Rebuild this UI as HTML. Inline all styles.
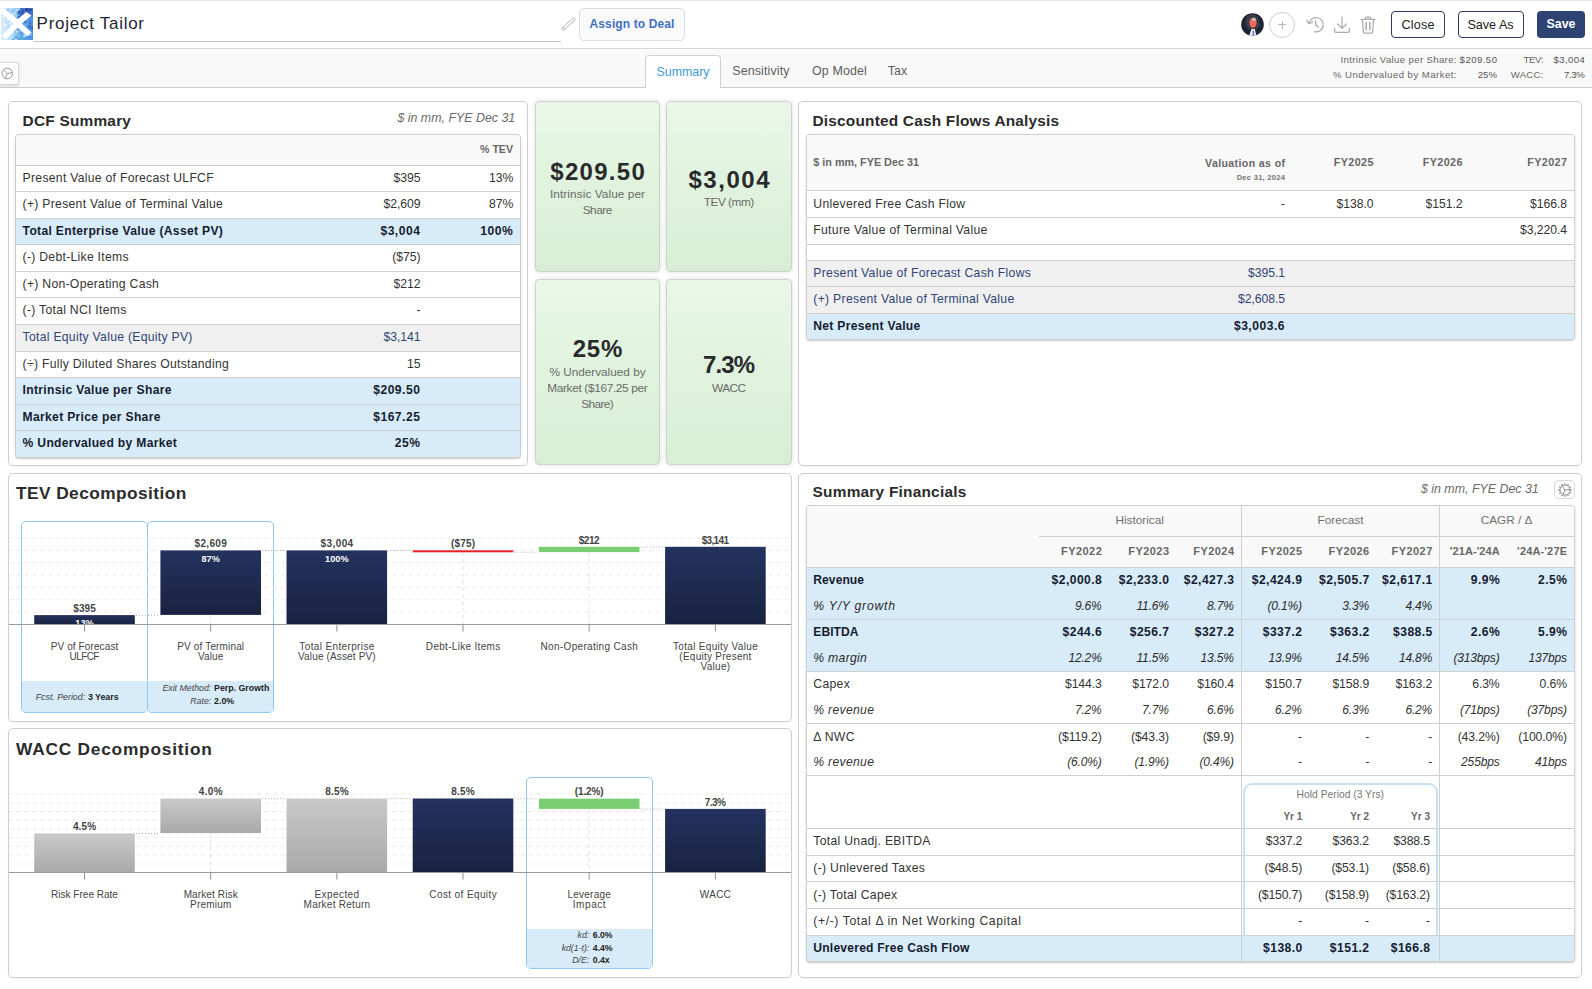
<!DOCTYPE html>
<html lang="en"><head><meta charset="utf-8"><title>Project Tailor</title>
<style>
html,body{margin:0;padding:0;}
body{width:1592px;height:989px;overflow:hidden;background:#fff;font-family:"Liberation Sans",Arial,sans-serif;color:#333;}
#r{position:relative;width:1592px;height:989px;overflow:hidden;}
#r div{position:absolute;box-sizing:border-box;}
#r svg{position:absolute;overflow:visible;}
.t{white-space:nowrap;}
.p{background:#fff;border:1px solid #cdcdcd;border-radius:5px;box-shadow:0 1px 2px rgba(0,0,0,.05);}
.tb{border:1px solid #cfcfcf;border-radius:4px;box-shadow:0 1px 2px rgba(0,0,0,.22);overflow:hidden;background:#fff;}
</style></head>
<body><div id="r">
<div style="left:0px;top:0px;width:1592px;height:1px;background:#e4e4e4;"></div>
<svg style="left:1px;top:8px" width="32" height="32" viewBox="0 0 32 32">
<defs><linearGradient id="lg" x1="0" y1="0" x2="1" y2="0"><stop offset="0" stop-color="#dcedf9"/><stop offset=".4" stop-color="#a6d5f4"/><stop offset=".62" stop-color="#62adeb"/><stop offset="1" stop-color="#4d8fe0"/></linearGradient><clipPath id="lc"><rect width="32" height="32"/></clipPath></defs>
<g clip-path="url(#lc)"><rect width="32" height="32" fill="url(#lg)"/>
<path d="M17 0 L32 0 L32 9 L27 6 L19 12 Z" fill="#3a62bd" opacity=".8"/>
<rect x="20.9" y="1.7" width="2.1" height="2.1" fill="#2c4fa6"/><rect x="28.3" y="1.0" width="2.1" height="2.1" fill="#1f3b86"/><rect x="16.6" y="4.8" width="1.4" height="1.4" fill="#2c4fa6"/><rect x="24.3" y="0.7" width="2.0" height="2.0" fill="#1f3b86"/><rect x="25.5" y="6.4" width="1.4" height="1.4" fill="#4b7fd6"/><rect x="16.7" y="2.4" width="2.0" height="2.0" fill="#1f3b86"/><rect x="20.3" y="1.6" width="1.5" height="1.5" fill="#3f6cc8"/><rect x="24.4" y="7.5" width="1.4" height="1.4" fill="#1f3b86"/><rect x="21.6" y="6.0" width="1.4" height="1.4" fill="#2c4fa6"/><rect x="25.3" y="5.5" width="2.0" height="2.0" fill="#3f6cc8"/><rect x="23.0" y="10.2" width="1.8" height="1.8" fill="#1f3b86"/><rect x="27.9" y="7.7" width="1.6" height="1.6" fill="#3f6cc8"/><rect x="23.9" y="9.6" width="2.2" height="2.2" fill="#3f6cc8"/><rect x="25.1" y="0.8" width="2.0" height="2.0" fill="#1f3b86"/><rect x="27.4" y="1.7" width="1.9" height="1.9" fill="#2c4fa6"/><rect x="30.4" y="0.9" width="2.0" height="2.0" fill="#3f6cc8"/><rect x="21.1" y="3.9" width="1.9" height="1.9" fill="#4b7fd6"/><rect x="17.0" y="1.0" width="1.7" height="1.7" fill="#2c4fa6"/><rect x="16.9" y="7.7" width="2.1" height="2.1" fill="#4b7fd6"/><rect x="20.3" y="4.2" width="2.2" height="2.2" fill="#2c4fa6"/><rect x="30.1" y="3.9" width="2.1" height="2.1" fill="#4b7fd6"/><rect x="16.9" y="8.5" width="1.5" height="1.5" fill="#1f3b86"/><rect x="22.0" y="10.1" width="1.9" height="1.9" fill="#1f3b86"/><rect x="22.7" y="6.0" width="2.4" height="2.4" fill="#4b7fd6"/><rect x="29.0" y="3.1" width="1.8" height="1.8" fill="#3f6cc8"/><rect x="26.2" y="4.2" width="1.6" height="1.6" fill="#2c4fa6"/><rect x="20.3" y="12.9" width="1.6" height="1.6" fill="#78baf0"/><rect x="28.8" y="12.1" width="1.7" height="1.7" fill="#4b86dc"/><rect x="23.4" y="15.3" width="2.0" height="2.0" fill="#4b86dc"/><rect x="27.0" y="17.8" width="2.1" height="2.1" fill="#3f6cc8"/><rect x="23.9" y="23.8" width="2.5" height="2.5" fill="#78baf0"/><rect x="23.2" y="15.7" width="1.9" height="1.9" fill="#78baf0"/><rect x="18.8" y="10.1" width="1.6" height="1.6" fill="#4b86dc"/><rect x="19.4" y="19.2" width="1.4" height="1.4" fill="#4b86dc"/><rect x="25.0" y="25.1" width="2.1" height="2.1" fill="#3f6cc8"/><rect x="29.4" y="19.4" width="1.5" height="1.5" fill="#3561bd"/><rect x="30.4" y="19.2" width="1.9" height="1.9" fill="#3f6cc8"/><rect x="29.0" y="25.9" width="1.9" height="1.9" fill="#78baf0"/><rect x="22.1" y="11.4" width="2.3" height="2.3" fill="#3561bd"/><rect x="24.2" y="20.8" width="2.0" height="2.0" fill="#4b86dc"/><rect x="30.4" y="18.0" width="1.5" height="1.5" fill="#3f6cc8"/><rect x="27.9" y="14.1" width="2.1" height="2.1" fill="#3f6cc8"/><rect x="27.1" y="13.4" width="1.8" height="1.8" fill="#4b86dc"/><rect x="22.6" y="12.8" width="2.0" height="2.0" fill="#3561bd"/><rect x="26.3" y="19.4" width="2.3" height="2.3" fill="#4b86dc"/><rect x="28.5" y="22.9" width="2.3" height="2.3" fill="#4b86dc"/><rect x="20.6" y="17.4" width="2.3" height="2.3" fill="#3f6cc8"/><rect x="28.3" y="17.0" width="1.6" height="1.6" fill="#3561bd"/><rect x="10.4" y="10.3" width="2.6" height="2.6" fill="#7ec0ef"/><rect x="6.0" y="1.1" width="1.9" height="1.9" fill="#7ec0ef"/><rect x="7.5" y="6.9" width="2.5" height="2.5" fill="#8fcbf2"/><rect x="10.8" y="7.2" width="2.3" height="2.3" fill="#8fcbf2"/><rect x="15.0" y="1.3" width="1.8" height="1.8" fill="#c4e3f8"/><rect x="10.7" y="2.0" width="2.3" height="2.3" fill="#7ec0ef"/><rect x="6.0" y="10.4" width="2.2" height="2.2" fill="#b5dcf6"/><rect x="9.8" y="10.4" width="2.2" height="2.2" fill="#c4e3f8"/><rect x="16.9" y="0.3" width="2.1" height="2.1" fill="#b5dcf6"/><rect x="14.7" y="1.6" width="2.4" height="2.4" fill="#b5dcf6"/><rect x="12.9" y="3.9" width="2.0" height="2.0" fill="#c4e3f8"/><rect x="5.3" y="8.8" width="2.2" height="2.2" fill="#8fcbf2"/><rect x="11.3" y="10.3" width="1.9" height="1.9" fill="#c4e3f8"/><rect x="14.9" y="2.3" width="1.6" height="1.6" fill="#7ec0ef"/><rect x="11.0" y="8.4" width="1.7" height="1.7" fill="#b5dcf6"/><rect x="15.0" y="0.7" width="2.3" height="2.3" fill="#b5dcf6"/><rect x="12.9" y="9.0" width="2.0" height="2.0" fill="#c4e3f8"/><rect x="11.4" y="5.8" width="1.3" height="1.3" fill="#b5dcf6"/><rect x="9.3" y="18.4" width="2.3" height="2.3" fill="#bfe0f6"/><rect x="2.1" y="15.4" width="2.2" height="2.2" fill="#eef7fd"/><rect x="3.9" y="16.4" width="2.0" height="2.0" fill="#eef7fd"/><rect x="10.6" y="6.3" width="1.5" height="1.5" fill="#eef7fd"/><rect x="9.3" y="16.2" width="2.0" height="2.0" fill="#eef7fd"/><rect x="5.3" y="18.5" width="2.0" height="2.0" fill="#bfe0f6"/><rect x="8.3" y="15.0" width="2.0" height="2.0" fill="#cfe7f8"/><rect x="6.1" y="10.4" width="2.0" height="2.0" fill="#ffffff"/><rect x="11.1" y="24.6" width="1.6" height="1.6" fill="#cfe7f8"/><rect x="1.6" y="7.7" width="1.9" height="1.9" fill="#eef7fd"/><rect x="8.1" y="14.4" width="1.6" height="1.6" fill="#ffffff"/><rect x="9.4" y="24.7" width="1.5" height="1.5" fill="#ffffff"/><rect x="1.7" y="24.4" width="2.6" height="2.6" fill="#bfe0f6"/><rect x="9.0" y="7.1" width="2.5" height="2.5" fill="#bfe0f6"/><rect x="11.9" y="23.3" width="1.5" height="1.5" fill="#cfe7f8"/><rect x="11.9" y="13.9" width="1.8" height="1.8" fill="#ffffff"/><rect x="3.8" y="20.9" width="1.3" height="1.3" fill="#cfe7f8"/><rect x="5.3" y="5.4" width="1.7" height="1.7" fill="#ffffff"/><rect x="6.1" y="6.4" width="2.6" height="2.6" fill="#bfe0f6"/><rect x="11.7" y="7.3" width="1.6" height="1.6" fill="#eef7fd"/><rect x="10.9" y="9.0" width="2.3" height="2.3" fill="#cfe7f8"/><rect x="10.2" y="19.9" width="2.5" height="2.5" fill="#cfe7f8"/><rect x="11.3" y="30.2" width="2.0" height="2.0" fill="#6fb4ee"/><rect x="10.0" y="21.6" width="2.2" height="2.2" fill="#3f8be0"/><rect x="27.7" y="23.7" width="1.3" height="1.3" fill="#4f9fe8"/><rect x="25.6" y="21.8" width="2.4" height="2.4" fill="#4f9fe8"/><rect x="13.8" y="22.2" width="1.3" height="1.3" fill="#c2e0f7"/><rect x="17.2" y="30.2" width="2.1" height="2.1" fill="#4f9fe8"/><rect x="19.6" y="23.4" width="1.4" height="1.4" fill="#d7ebf9"/><rect x="13.8" y="22.8" width="2.5" height="2.5" fill="#6fb4ee"/><rect x="19.7" y="23.1" width="1.9" height="1.9" fill="#d7ebf9"/><rect x="14.0" y="29.0" width="2.6" height="2.6" fill="#4f9fe8"/><rect x="8.3" y="28.3" width="2.0" height="2.0" fill="#d7ebf9"/><rect x="19.3" y="23.5" width="1.9" height="1.9" fill="#3f8be0"/><rect x="22.4" y="26.5" width="2.5" height="2.5" fill="#c2e0f7"/><rect x="14.8" y="23.2" width="1.6" height="1.6" fill="#d7ebf9"/><rect x="26.3" y="28.1" width="2.1" height="2.1" fill="#3f8be0"/><rect x="29.8" y="30.8" width="2.4" height="2.4" fill="#4f9fe8"/><rect x="9.6" y="28.4" width="1.6" height="1.6" fill="#d7ebf9"/><rect x="9.2" y="27.7" width="1.8" height="1.8" fill="#c2e0f7"/><rect x="22.8" y="23.8" width="1.6" height="1.6" fill="#6fb4ee"/><rect x="9.0" y="22.9" width="1.6" height="1.6" fill="#4f9fe8"/><rect x="13.8" y="30.6" width="2.6" height="2.6" fill="#c2e0f7"/><rect x="15.1" y="21.3" width="2.4" height="2.4" fill="#d7ebf9"/><rect x="15.8" y="21.0" width="1.8" height="1.8" fill="#3f8be0"/><rect x="14.1" y="27.6" width="1.6" height="1.6" fill="#4f9fe8"/>
<path d="M0 1 L2.6 0 L16.3 11.6 L25.2 4 L30.6 7.4 L20.6 15.6 L30.6 24.4 L26.6 28.6 L16.6 19.6 L5 31.6 L0.6 27.6 L12.4 16 L0 5 Z" fill="#fff"/>
</g></svg>
<div class="t" style="top:12.00px;font-size:17px;line-height:24px;color:#1d2433;letter-spacing:0.727px;left:36.60px;">Project Tailor</div>
<div style="left:33px;top:41px;width:528px;height:1px;background:#c4c4c4;"></div>
<svg style="left:560.4px;top:15px" width="18" height="18" viewBox="0 0 18 18" fill="none" stroke="#c2c2c2" stroke-width="1"><g transform="rotate(-43 8.4 9)"><rect x="0.2" y="7.6" width="16.4" height="2.8" rx="1"/><path d="M2.6 7.4 L2.6 10.6"/></g></svg>
<div style="left:579px;top:8px;width:106px;height:33px;border:1px solid #dbdbdb;border-radius:5px;background:#fafafa;"></div>
<div class="t" style="top:16.00px;font-size:12px;line-height:16px;color:#416fc4;font-weight:700;letter-spacing:0.119px;left:632.06px;transform:translateX(-50%);">Assign to Deal</div>
<svg style="left:1241px;top:13px" width="23" height="23" viewBox="0 0 23 23"><defs><clipPath id="av"><circle cx="11.5" cy="11.5" r="11.3"/></clipPath></defs>
<g clip-path="url(#av)"><rect width="23" height="23" fill="#1f2433"/><path d="M6 3 Q12 -1 17 4 L19 12 L16 16 L7 16 L4 10 Z" fill="#3a3d49"/><ellipse cx="12" cy="9.6" rx="3.6" ry="5.2" fill="#f0675c"/><ellipse cx="13" cy="6.4" rx="2" ry="1.6" fill="#b9bcc4"/><path d="M8 23 L10.5 16 L13.8 16 L15.5 23 Z" fill="#f4f4f6"/><path d="M11.6 17.5 L13 17.5 L13.4 23 L11.4 23 Z" fill="#5f86c8"/></g></svg>
<div style="left:1269px;top:12px;width:26px;height:26px;border:1px solid #cbcbcb;border-radius:50%;background:#fff;"></div>
<div style="left:1277.6px;top:24.4px;width:8.800000000000182px;height:1px;background:#b9b9b9;"></div>
<div style="left:1281.5px;top:20.5px;width:1px;height:8.8px;background:#b9b9b9;"></div>
<svg style="left:1305px;top:15px" width="20" height="20" viewBox="0 0 20 20" fill="none" stroke="#ababab" stroke-width="1.25" stroke-linecap="round" stroke-linejoin="round"><path d="M4.2 8.4 A7.1 7.1 0 1 1 9.5 16.6"/><path d="M2 5.2 L4.1 8.7 L7.6 6.9"/><path d="M10.6 5.6 L10.6 9.9 L13.4 11.9"/></svg>
<svg style="left:1333px;top:15px" width="18" height="20" viewBox="0 0 18 20" fill="none" stroke="#ababab" stroke-width="1.25" stroke-linecap="round" stroke-linejoin="round"><path d="M9 2 L9 13.2 M4.6 9 L9 13.4 L13.4 9"/><path d="M1.6 13.4 L1.6 16.2 Q1.6 17.4 2.8 17.4 L15.2 17.4 Q16.4 17.4 16.4 16.2 L16.4 13.4"/></svg>
<svg style="left:1360px;top:15px" width="16" height="20" viewBox="0 0 16 20" fill="none" stroke="#ababab" stroke-width="1.25" stroke-linecap="round" stroke-linejoin="round"><path d="M1.2 4.4 L14.8 4.4 M5.4 4.2 Q5.4 1.8 8 1.8 Q10.6 1.8 10.6 4.2 M2.4 4.6 L3.4 17.2 Q3.5 18.2 4.5 18.2 L11.5 18.2 Q12.5 18.2 12.6 17.2 L13.6 4.6"/><path d="M6.2 7.4 L6.2 15 M9.8 7.4 L9.8 15" stroke-width="1.5"/></svg>
<div style="left:1391px;top:11px;width:54px;height:27px;border:1.3px solid #2c3a63;border-radius:4px;background:#fff;"></div>
<div class="t" style="top:17.00px;font-size:12.6px;line-height:16px;color:#222;letter-spacing:0.2px;left:1418.00px;transform:translateX(-50%);">Close</div>
<div style="left:1458px;top:11px;width:66px;height:27px;border:1.3px solid #2c3a63;border-radius:4px;background:#fff;"></div>
<div class="t" style="top:17.00px;font-size:12.6px;line-height:16px;color:#222;left:1490.50px;transform:translateX(-50%);">Save As</div>
<div style="left:1537px;top:11px;width:48px;height:27px;border-radius:4px;background:#2e4273;"></div>
<div class="t" style="top:16.00px;font-size:12.4px;line-height:16px;color:#fff;font-weight:700;left:1561.00px;transform:translateX(-50%);">Save</div>
<div style="left:0px;top:48px;width:1592px;height:40px;background:#f9f9f9;border-top:1px solid #d6d6d6;border-bottom:1px solid #cdcdcd;"></div>
<div style="left:-2px;top:62px;width:20.5px;height:22.5px;background:#fff;border:1px solid #d8d8d8;border-radius:3px;box-shadow:0 1px 3px rgba(0,0,0,.15);"></div>
<svg style="left:1px;top:66.5px" width="13" height="13" viewBox="0 0 13 13" fill="none" stroke="#9a9a9a" stroke-width="1"><circle cx="6.2" cy="6.5" r="5.3"/><path d="M6.2 6.5 L2.6 3 M6.2 6.5 L11.3 5.6 M6.2 6.5 L4.4 11.2"/></svg>
<div style="left:645px;top:55px;width:76px;height:33px;background:#fff;border:1px solid #d0d0d0;border-bottom:none;border-radius:4px 4px 0 0;"></div>
<div class="t" style="top:64.00px;font-size:12.4px;line-height:16px;color:#429bd6;left:683.00px;transform:translateX(-50%);">Summary</div>
<div class="t" style="top:63.00px;font-size:12.4px;line-height:16px;color:#5c5c5c;letter-spacing:0.15px;left:761.00px;transform:translateX(-50%);">Sensitivity</div>
<div class="t" style="top:63.00px;font-size:12.4px;line-height:16px;color:#5c5c5c;letter-spacing:0.15px;left:839.50px;transform:translateX(-50%);">Op Model</div>
<div class="t" style="top:63.00px;font-size:12.4px;line-height:16px;color:#5c5c5c;letter-spacing:0.15px;left:897.50px;transform:translateX(-50%);">Tax</div>
<div class="t" style="top:54.00px;font-size:9.6px;line-height:12px;color:#666;letter-spacing:0.357px;right:135.14px;">Intrinsic Value per Share:</div>
<div class="t" style="top:54.00px;font-size:9.6px;line-height:12px;color:#555;letter-spacing:0.45px;right:94.55px;">$209.50</div>
<div class="t" style="top:69.00px;font-size:9.6px;line-height:12px;color:#666;letter-spacing:0.456px;right:135.04px;">% Undervalued by Market:</div>
<div class="t" style="top:69.00px;font-size:9.6px;line-height:12px;color:#555;letter-spacing:0.043px;right:94.96px;">25%</div>
<div class="t" style="top:54.00px;font-size:9.6px;line-height:12px;color:#666;letter-spacing:-0.294px;right:48.79px;">TEV:</div>
<div class="t" style="top:54.00px;font-size:9.6px;line-height:12px;color:#555;letter-spacing:0.407px;right:6.79px;">$3,004</div>
<div class="t" style="top:69.00px;font-size:9.6px;line-height:12px;color:#666;letter-spacing:0.315px;right:48.18px;">WACC:</div>
<div class="t" style="top:69.00px;font-size:9.6px;line-height:12px;color:#555;letter-spacing:-0.327px;right:7.53px;">7.3%</div>
<div class="p" style="left:8px;top:101px;width:520px;height:365px;"></div>
<div class="t" style="top:111.00px;font-size:15.4px;line-height:20px;color:#2b2b2b;font-weight:700;letter-spacing:0.228px;left:22.60px;">DCF Summary</div>
<div class="t" style="top:110.00px;font-size:12.4px;line-height:16px;color:#6a6a6a;font-style:italic;right:1076.80px;">$ in mm, FYE Dec 31</div>
<div class="tb" style="left:15px;top:134px;width:506px;height:324.00px;">
<div style="left:0;top:0;width:506px;height:30px;background:#f9f9f9;"></div>
<div style="left:0;top:30px;width:506px;height:28.55px;background:#fff;border-top:1px solid #cfcfcf;"></div>
<div style="left:0;top:56px;width:506px;height:28.55px;background:#fff;border-top:1px solid #cfcfcf;"></div>
<div style="left:0;top:83px;width:506px;height:28.55px;background:#d8ebf9;border-top:1px solid #cfcfcf;"></div>
<div style="left:0;top:109px;width:506px;height:28.55px;background:#fff;border-top:1px solid #cfcfcf;"></div>
<div style="left:0;top:136px;width:506px;height:28.55px;background:#fff;border-top:1px solid #cfcfcf;"></div>
<div style="left:0;top:162px;width:506px;height:28.55px;background:#fff;border-top:1px solid #cfcfcf;"></div>
<div style="left:0;top:189px;width:506px;height:28.55px;background:#f0f0f0;border-top:1px solid #cfcfcf;"></div>
<div style="left:0;top:216px;width:506px;height:28.55px;background:#fff;border-top:1px solid #cfcfcf;"></div>
<div style="left:0;top:242px;width:506px;height:28.55px;background:#d8ebf9;border-top:1px solid #cfcfcf;"></div>
<div style="left:0;top:269px;width:506px;height:28.55px;background:#d8ebf9;border-top:1px solid #cfcfcf;"></div>
<div style="left:0;top:295px;width:506px;height:28.55px;background:#d8ebf9;border-top:1px solid #cfcfcf;"></div>
</div>
<div class="t" style="top:142.00px;font-size:10.6px;line-height:14px;color:#666;font-weight:700;right:1079.00px;">% TEV</div>
<div class="t" style="top:170.00px;font-size:12.2px;line-height:16px;color:#333;letter-spacing:0.28px;left:22.60px;">Present Value of Forecast ULFCF</div>
<div class="t" style="top:170.00px;font-size:12.2px;line-height:16px;color:#333;letter-spacing:-0.05px;right:1171.60px;">$395</div>
<div class="t" style="top:170.00px;font-size:12.2px;line-height:16px;color:#333;letter-spacing:-0.05px;right:1078.80px;">13%</div>
<div class="t" style="top:196.00px;font-size:12.2px;line-height:16px;color:#333;letter-spacing:0.28px;left:22.60px;">(+) Present Value of Terminal Value</div>
<div class="t" style="top:196.00px;font-size:12.2px;line-height:16px;color:#333;letter-spacing:-0.05px;right:1171.60px;">$2,609</div>
<div class="t" style="top:196.00px;font-size:12.2px;line-height:16px;color:#333;letter-spacing:-0.05px;right:1078.80px;">87%</div>
<div class="t" style="top:223.00px;font-size:12.1px;line-height:16px;color:#151c30;font-weight:700;letter-spacing:0.32px;left:22.60px;">Total Enterprise Value (Asset PV)</div>
<div class="t" style="top:223.00px;font-size:12.1px;line-height:16px;color:#151c30;font-weight:700;letter-spacing:0.5px;right:1171.60px;">$3,004</div>
<div class="t" style="top:223.00px;font-size:12.1px;line-height:16px;color:#151c30;font-weight:700;letter-spacing:0.5px;right:1078.80px;">100%</div>
<div class="t" style="top:249.00px;font-size:12.2px;line-height:16px;color:#333;letter-spacing:0.28px;left:22.60px;">(-) Debt-Like Items</div>
<div class="t" style="top:249.00px;font-size:12.2px;line-height:16px;color:#333;letter-spacing:-0.05px;right:1171.60px;">($75)</div>
<div class="t" style="top:276.00px;font-size:12.2px;line-height:16px;color:#333;letter-spacing:0.28px;left:22.60px;">(+) Non-Operating Cash</div>
<div class="t" style="top:276.00px;font-size:12.2px;line-height:16px;color:#333;letter-spacing:-0.05px;right:1171.60px;">$212</div>
<div class="t" style="top:302.00px;font-size:12.2px;line-height:16px;color:#333;letter-spacing:0.28px;left:22.60px;">(-) Total NCI Items</div>
<div class="t" style="top:302.00px;font-size:12.2px;line-height:16px;color:#333;letter-spacing:-0.05px;right:1171.60px;">-</div>
<div class="t" style="top:329.00px;font-size:12.2px;line-height:16px;color:#2f4574;letter-spacing:0.28px;left:22.60px;">Total Equity Value (Equity PV)</div>
<div class="t" style="top:329.00px;font-size:12.2px;line-height:16px;color:#2f4574;letter-spacing:-0.05px;right:1171.60px;">$3,141</div>
<div class="t" style="top:356.00px;font-size:12.2px;line-height:16px;color:#333;letter-spacing:0.28px;left:22.60px;">(÷) Fully Diluted Shares Outstanding</div>
<div class="t" style="top:356.00px;font-size:12.2px;line-height:16px;color:#333;letter-spacing:-0.05px;right:1171.60px;">15</div>
<div class="t" style="top:382.00px;font-size:12.1px;line-height:16px;color:#151c30;font-weight:700;letter-spacing:0.32px;left:22.60px;">Intrinsic Value per Share</div>
<div class="t" style="top:382.00px;font-size:12.1px;line-height:16px;color:#151c30;font-weight:700;letter-spacing:0.5px;right:1171.60px;">$209.50</div>
<div class="t" style="top:409.00px;font-size:12.1px;line-height:16px;color:#151c30;font-weight:700;letter-spacing:0.32px;left:22.60px;">Market Price per Share</div>
<div class="t" style="top:409.00px;font-size:12.1px;line-height:16px;color:#151c30;font-weight:700;letter-spacing:0.5px;right:1171.60px;">$167.25</div>
<div class="t" style="top:435.00px;font-size:12.1px;line-height:16px;color:#151c30;font-weight:700;letter-spacing:0.32px;left:22.60px;">% Undervalued by Market</div>
<div class="t" style="top:435.00px;font-size:12.1px;line-height:16px;color:#151c30;font-weight:700;letter-spacing:0.5px;right:1171.60px;">25%</div>
<div style="left:535px;top:101px;width:125px;height:171px;border:1px solid #cdd3cc;border-radius:4px;background:linear-gradient(#e9f7e7,#d7eed4);box-shadow:0 0 5px rgba(0,0,0,.13);"></div>
<div class="t" style="top:157.00px;font-size:24px;line-height:30px;color:#2a2a2c;font-weight:700;letter-spacing:1.291px;left:598.15px;transform:translateX(-50%);">$209.50</div>
<div class="t" style="top:187.00px;font-size:11.8px;line-height:15px;color:#6a6a6a;letter-spacing:0.079px;left:597.54px;transform:translateX(-50%);">Intrinsic Value per</div>
<div class="t" style="top:203.00px;font-size:11.8px;line-height:15px;color:#6a6a6a;letter-spacing:-0.497px;left:597.25px;transform:translateX(-50%);">Share</div>
<div style="left:666px;top:101px;width:126px;height:171px;border:1px solid #cdd3cc;border-radius:4px;background:linear-gradient(#e9f7e7,#d7eed4);box-shadow:0 0 5px rgba(0,0,0,.13);"></div>
<div class="t" style="top:165.00px;font-size:24px;line-height:30px;color:#2a2a2c;font-weight:700;letter-spacing:1.518px;left:729.76px;transform:translateX(-50%);">$3,004</div>
<div class="t" style="top:195.00px;font-size:11.8px;line-height:15px;color:#6a6a6a;letter-spacing:-0.464px;left:728.77px;transform:translateX(-50%);">TEV (mm)</div>
<div style="left:535px;top:279px;width:125px;height:186px;border:1px solid #cdd3cc;border-radius:4px;background:linear-gradient(#e9f7e7,#d7eed4);box-shadow:0 0 5px rgba(0,0,0,.13);"></div>
<div class="t" style="top:334.00px;font-size:24px;line-height:30px;color:#2a2a2c;font-weight:700;letter-spacing:0.732px;left:597.87px;transform:translateX(-50%);">25%</div>
<div class="t" style="top:365.00px;font-size:11.8px;line-height:15px;color:#6a6a6a;letter-spacing:-0.015px;left:597.49px;transform:translateX(-50%);">% Undervalued by</div>
<div class="t" style="top:381.00px;font-size:11.8px;line-height:15px;color:#6a6a6a;letter-spacing:-0.32px;left:597.34px;transform:translateX(-50%);">Market ($167.25 per</div>
<div class="t" style="top:397.00px;font-size:11.8px;line-height:15px;color:#6a6a6a;letter-spacing:-0.604px;left:597.20px;transform:translateX(-50%);">Share)</div>
<div style="left:666px;top:279px;width:126px;height:186px;border:1px solid #cdd3cc;border-radius:4px;background:linear-gradient(#e9f7e7,#d7eed4);box-shadow:0 0 5px rgba(0,0,0,.13);"></div>
<div class="t" style="top:350.00px;font-size:24px;line-height:30px;color:#2a2a2c;font-weight:700;letter-spacing:-0.901px;left:728.55px;transform:translateX(-50%);">7.3%</div>
<div class="t" style="top:381.00px;font-size:11.8px;line-height:15px;color:#6a6a6a;letter-spacing:-0.538px;left:728.73px;transform:translateX(-50%);">WACC</div>
<div class="p" style="left:798px;top:101px;width:784px;height:365px;"></div>
<div class="t" style="top:111.00px;font-size:15.4px;line-height:20px;color:#2b2b2b;font-weight:700;letter-spacing:0.208px;left:812.50px;">Discounted Cash Flows Analysis</div>
<div class="tb" style="left:806px;top:134px;width:769px;height:206px;">
<div style="left:0;top:0;width:769px;height:55px;background:#f9f9f9;"></div>
<div style="left:0;top:55px;width:769px;height:28px;background:#fff;border-top:1px solid #cfcfcf;"></div>
<div style="left:0;top:82px;width:769px;height:28px;background:#fff;border-top:1px solid #cfcfcf;"></div>
<div style="left:0;top:109px;width:769px;height:17px;background:#fff;border-top:1px solid #cfcfcf;"></div>
<div style="left:0;top:125px;width:769px;height:27px;background:#f0f0f0;border-top:1px solid #cfcfcf;"></div>
<div style="left:0;top:151px;width:769px;height:28px;background:#f0f0f0;border-top:1px solid #cfcfcf;"></div>
<div style="left:0;top:178px;width:769px;height:28px;background:#d8ebf9;border-top:1px solid #cfcfcf;"></div>
</div>
<div class="t" style="top:155.00px;font-size:10.8px;line-height:14px;color:#676767;font-weight:700;left:813.30px;">$ in mm, FYE Dec 31</div>
<div class="t" style="top:156.00px;font-size:10.6px;line-height:14px;color:#676767;font-weight:700;letter-spacing:0.371px;right:306.63px;">Valuation as of</div>
<div class="t" style="top:173.00px;font-size:7.6px;line-height:10px;color:#747474;font-weight:700;letter-spacing:0.251px;right:306.75px;">Dec 31, 2024</div>
<div class="t" style="top:155.00px;font-size:10.8px;line-height:14px;color:#676767;font-weight:700;letter-spacing:0.374px;right:218.13px;">FY2025</div>
<div class="t" style="top:155.00px;font-size:10.8px;line-height:14px;color:#676767;font-weight:700;letter-spacing:0.374px;right:129.13px;">FY2026</div>
<div class="t" style="top:155.00px;font-size:10.8px;line-height:14px;color:#676767;font-weight:700;letter-spacing:0.374px;right:24.63px;">FY2027</div>
<div class="t" style="top:196.00px;font-size:12.2px;line-height:16px;color:#333;letter-spacing:0.3px;left:813.30px;">Unlevered Free Cash Flow</div>
<div class="t" style="top:196.00px;font-size:12.2px;line-height:16px;color:#333;letter-spacing:-0.05px;right:307.00px;">-</div>
<div class="t" style="top:196.00px;font-size:12.2px;line-height:16px;color:#333;letter-spacing:-0.05px;right:218.50px;">$138.0</div>
<div class="t" style="top:196.00px;font-size:12.2px;line-height:16px;color:#333;letter-spacing:-0.05px;right:129.50px;">$151.2</div>
<div class="t" style="top:196.00px;font-size:12.2px;line-height:16px;color:#333;letter-spacing:-0.05px;right:25.00px;">$166.8</div>
<div class="t" style="top:222.00px;font-size:12.2px;line-height:16px;color:#333;letter-spacing:0.3px;left:813.30px;">Future Value of Terminal Value</div>
<div class="t" style="top:222.00px;font-size:12.2px;line-height:16px;color:#333;letter-spacing:-0.05px;right:25.00px;">$3,220.4</div>
<div class="t" style="top:265.00px;font-size:12.2px;line-height:16px;color:#2f4574;letter-spacing:0.3px;left:813.30px;">Present Value of Forecast Cash Flows</div>
<div class="t" style="top:265.00px;font-size:12.2px;line-height:16px;color:#2f4574;letter-spacing:-0.05px;right:307.00px;">$395.1</div>
<div class="t" style="top:291.00px;font-size:12.2px;line-height:16px;color:#2f4574;letter-spacing:0.3px;left:813.30px;">(+) Present Value of Terminal Value</div>
<div class="t" style="top:291.00px;font-size:12.2px;line-height:16px;color:#2f4574;letter-spacing:-0.05px;right:307.00px;">$2,608.5</div>
<div class="t" style="top:318.00px;font-size:12.1px;line-height:16px;color:#151c30;font-weight:700;letter-spacing:0.3px;left:813.30px;">Net Present Value</div>
<div class="t" style="top:318.00px;font-size:12.1px;line-height:16px;color:#151c30;font-weight:700;letter-spacing:0.5px;right:307.00px;">$3,003.6</div>
<div class="p" style="left:8px;top:473px;width:784px;height:249px;"></div>
<div class="t" style="top:482.00px;font-size:17.3px;line-height:22px;color:#2b2b2b;font-weight:700;letter-spacing:0.443px;left:16.00px;">TEV Decomposition</div>
<svg style="left:0;top:0" width="0" height="0"><defs>
<linearGradient id="nv" x1="0" y1="0" x2="0" y2="1"><stop offset="0" stop-color="#24325f"/><stop offset="1" stop-color="#19223f"/></linearGradient>
<linearGradient id="gy" x1="0" y1="0" x2="0" y2="1"><stop offset="0" stop-color="#c9c9c9"/><stop offset="1" stop-color="#a9a9a9"/></linearGradient>
</defs></svg>
<div style="left:21px;top:521px;width:127px;height:192px;border:1px solid #8fc7ef;border-radius:5px;overflow:hidden;"><div style="left:0;top:159px;width:127px;height:192px;background:#d8ebf9;"></div></div>
<div style="left:147px;top:521px;width:127px;height:192px;border:1px solid #8fc7ef;border-radius:5px;overflow:hidden;"><div style="left:0;top:159px;width:127px;height:192px;background:#d8ebf9;"></div></div>
<svg style="left:0;top:0" width="1592" height="989"><line x1="9" x2="791" y1="538" y2="538" stroke="#e7e7e7" stroke-width="1" stroke-dasharray="3.5 4.5"/><line x1="9" x2="791" y1="550.4" y2="550.4" stroke="#e7e7e7" stroke-width="1" stroke-dasharray="3.5 4.5"/><line x1="9" x2="791" y1="562.7" y2="562.7" stroke="#e7e7e7" stroke-width="1" stroke-dasharray="3.5 4.5"/><line x1="9" x2="791" y1="575" y2="575" stroke="#e7e7e7" stroke-width="1" stroke-dasharray="3.5 4.5"/><line x1="9" x2="791" y1="587.4" y2="587.4" stroke="#e7e7e7" stroke-width="1" stroke-dasharray="3.5 4.5"/><line x1="9" x2="791" y1="599.7" y2="599.7" stroke="#e7e7e7" stroke-width="1" stroke-dasharray="3.5 4.5"/><line x1="9" x2="791" y1="612.2" y2="612.2" stroke="#e7e7e7" stroke-width="1" stroke-dasharray="3.5 4.5"/><line x1="210.67000000000002" x2="210.67000000000002" y1="615" y2="624" stroke="#e2e2e2" stroke-width="1" stroke-dasharray="4 3"/><line x1="463.01" x2="463.01" y1="552" y2="624" stroke="#e2e2e2" stroke-width="1" stroke-dasharray="4 3"/><line x1="589.1800000000001" x2="589.1800000000001" y1="552" y2="624" stroke="#e2e2e2" stroke-width="1" stroke-dasharray="4 3"/><rect x="34.2" y="615.1" width="100.6" height="9.6" fill="url(#nv)"/><rect x="160.4" y="550.4" width="100.6" height="64.5" fill="url(#nv)"/><rect x="286.5" y="550.4" width="100.6" height="74.3" fill="url(#nv)"/><rect x="412.7" y="550.3" width="100.6" height="2.0" fill="#e8202a"/><rect x="538.9" y="546.8" width="100.6" height="5.3" fill="#7bcd74"/><rect x="665.1" y="546.8" width="100.6" height="77.9" fill="url(#nv)"/><line x1="136.0" x2="159.7" y1="615.3" y2="615.3" stroke="#a8a8a8" stroke-width="1" stroke-dasharray="1 2"/><line x1="262.2" x2="285.8" y1="550.6" y2="550.6" stroke="#a8a8a8" stroke-width="1" stroke-dasharray="1 2"/><line x1="388.3" x2="412.0" y1="550.6" y2="550.6" stroke="#a8a8a8" stroke-width="1" stroke-dasharray="1 2"/><line x1="514.5" x2="538.2" y1="552.2" y2="552.2" stroke="#a8a8a8" stroke-width="1" stroke-dasharray="1 2"/><line x1="640.7" x2="664.4" y1="547" y2="547" stroke="#a8a8a8" stroke-width="1" stroke-dasharray="1 2"/><line x1="9" x2="791" y1="624.5" y2="624.5" stroke="#999" stroke-width="1"/><line x1="84.5" x2="84.5" y1="625" y2="631.6" stroke="#8f8f8f" stroke-width="1"/><line x1="210.67000000000002" x2="210.67000000000002" y1="625" y2="631.6" stroke="#8f8f8f" stroke-width="1"/><line x1="336.84000000000003" x2="336.84000000000003" y1="625" y2="631.6" stroke="#8f8f8f" stroke-width="1"/><line x1="463.01" x2="463.01" y1="625" y2="631.6" stroke="#8f8f8f" stroke-width="1"/><line x1="589.1800000000001" x2="589.1800000000001" y1="625" y2="631.6" stroke="#8f8f8f" stroke-width="1"/><line x1="715.35" x2="715.35" y1="625" y2="631.6" stroke="#8f8f8f" stroke-width="1"/></svg>
<div class="t" style="top:602.00px;font-size:10px;line-height:13px;color:#444;font-weight:700;letter-spacing:0.051px;left:84.53px;transform:translateX(-50%);">$395</div>
<div class="t" style="top:537.00px;font-size:10px;line-height:13px;color:#444;font-weight:700;letter-spacing:0.343px;left:210.84px;transform:translateX(-50%);">$2,609</div>
<div class="t" style="top:537.00px;font-size:10px;line-height:13px;color:#444;font-weight:700;letter-spacing:0.423px;left:337.05px;transform:translateX(-50%);">$3,004</div>
<div class="t" style="top:537.00px;font-size:10px;line-height:13px;color:#444;font-weight:700;letter-spacing:0.163px;left:463.09px;transform:translateX(-50%);">($75)</div>
<div class="t" style="top:534.00px;font-size:10px;line-height:13px;color:#444;font-weight:700;letter-spacing:-0.449px;left:588.96px;transform:translateX(-50%);">$212</div>
<div class="t" style="top:534.00px;font-size:10px;line-height:13px;color:#444;font-weight:700;letter-spacing:-0.637px;left:715.03px;transform:translateX(-50%);">$3,141</div>
<div class="t" style="top:553.00px;font-size:9.2px;line-height:12px;color:#fff;font-weight:700;left:210.67px;transform:translateX(-50%);">87%</div>
<div class="t" style="top:553.00px;font-size:9.2px;line-height:12px;color:#fff;font-weight:700;left:336.84px;transform:translateX(-50%);">100%</div>
<div style="left:34px;top:615px;width:101px;height:9.2px;overflow:hidden;"><div class="t" style="left:50.5px;transform:translateX(-50%);top:2.2px;font-size:9.2px;line-height:12px;font-weight:700;color:#fff;">13%</div></div>
<div class="t" style="top:640.00px;font-size:10px;line-height:13px;color:#444;letter-spacing:0.112px;left:84.56px;transform:translateX(-50%);">PV of Forecast</div>
<div class="t" style="top:650.00px;font-size:10px;line-height:13px;color:#444;letter-spacing:-0.581px;left:84.21px;transform:translateX(-50%);">ULFCF</div>
<div class="t" style="top:640.00px;font-size:10px;line-height:13px;color:#444;letter-spacing:0.15px;left:210.75px;transform:translateX(-50%);">PV of Terminal</div>
<div class="t" style="top:650.00px;font-size:10px;line-height:13px;color:#444;letter-spacing:0.116px;left:210.73px;transform:translateX(-50%);">Value</div>
<div class="t" style="top:640.00px;font-size:10px;line-height:13px;color:#444;letter-spacing:0.368px;left:337.02px;transform:translateX(-50%);">Total Enterprise</div>
<div class="t" style="top:650.00px;font-size:10px;line-height:13px;color:#444;letter-spacing:0.146px;left:336.91px;transform:translateX(-50%);">Value (Asset PV)</div>
<div class="t" style="top:640.00px;font-size:10px;line-height:13px;color:#444;letter-spacing:0.305px;left:463.16px;transform:translateX(-50%);">Debt-Like Items</div>
<div class="t" style="top:640.00px;font-size:10px;line-height:13px;color:#444;letter-spacing:0.323px;left:589.34px;transform:translateX(-50%);">Non-Operating Cash</div>
<div class="t" style="top:640.00px;font-size:10px;line-height:13px;color:#444;letter-spacing:0.323px;left:715.51px;transform:translateX(-50%);">Total Equity Value</div>
<div class="t" style="top:650.00px;font-size:10px;line-height:13px;color:#444;letter-spacing:0.26px;left:715.48px;transform:translateX(-50%);">(Equity Present</div>
<div class="t" style="top:660.00px;font-size:10px;line-height:13px;color:#444;letter-spacing:0.307px;left:715.50px;transform:translateX(-50%);">Value)</div>
<div class="t" style="top:692.00px;font-size:8.8px;line-height:11px;color:#444;font-style:italic;right:1506.90px;">Fcst. Period:</div>
<div class="t" style="top:692.00px;font-size:8.8px;line-height:11px;color:#222;font-weight:700;left:87.90px;">3 Years</div>
<div class="t" style="top:683.00px;font-size:8.8px;line-height:11px;color:#444;font-style:italic;right:1380.73px;">Exit Method:</div>
<div class="t" style="top:683.00px;font-size:8.8px;line-height:11px;color:#222;font-weight:700;left:214.07px;">Perp. Growth</div>
<div class="t" style="top:696.00px;font-size:8.8px;line-height:11px;color:#444;font-style:italic;right:1380.73px;">Rate:</div>
<div class="t" style="top:696.00px;font-size:8.8px;line-height:11px;color:#222;font-weight:700;left:214.07px;">2.0%</div>
<div class="p" style="left:8px;top:728px;width:784px;height:250px;"></div>
<div class="t" style="top:738.00px;font-size:17.3px;line-height:22px;color:#2b2b2b;font-weight:700;letter-spacing:0.787px;left:16.00px;">WACC Decomposition</div>
<div style="left:526px;top:777px;width:127px;height:192px;border:1px solid #8fc7ef;border-radius:5px;overflow:hidden;"><div style="left:0;top:151px;width:127px;height:192px;background:#d8ebf9;"></div></div>
<svg style="left:0;top:0" width="1592" height="989"><line x1="9" x2="791" y1="794.00" y2="794.00" stroke="#e7e7e7" stroke-width="1" stroke-dasharray="3.5 4.5"/><line x1="9" x2="791" y1="802.75" y2="802.75" stroke="#e7e7e7" stroke-width="1" stroke-dasharray="3.5 4.5"/><line x1="9" x2="791" y1="811.50" y2="811.50" stroke="#e7e7e7" stroke-width="1" stroke-dasharray="3.5 4.5"/><line x1="9" x2="791" y1="820.25" y2="820.25" stroke="#e7e7e7" stroke-width="1" stroke-dasharray="3.5 4.5"/><line x1="9" x2="791" y1="829.00" y2="829.00" stroke="#e7e7e7" stroke-width="1" stroke-dasharray="3.5 4.5"/><line x1="9" x2="791" y1="837.75" y2="837.75" stroke="#e7e7e7" stroke-width="1" stroke-dasharray="3.5 4.5"/><line x1="9" x2="791" y1="846.50" y2="846.50" stroke="#e7e7e7" stroke-width="1" stroke-dasharray="3.5 4.5"/><line x1="9" x2="791" y1="855.25" y2="855.25" stroke="#e7e7e7" stroke-width="1" stroke-dasharray="3.5 4.5"/><line x1="9" x2="791" y1="864.00" y2="864.00" stroke="#e7e7e7" stroke-width="1" stroke-dasharray="3.5 4.5"/><line x1="210.67000000000002" x2="210.67000000000002" y1="833" y2="872" stroke="#e2e2e2" stroke-width="1" stroke-dasharray="4 3"/><line x1="589.1800000000001" x2="589.1800000000001" y1="809" y2="872" stroke="#e2e2e2" stroke-width="1" stroke-dasharray="4 3"/><rect x="34.2" y="833.4" width="100.6" height="39.1" fill="url(#gy)"/><rect x="160.4" y="798.5" width="100.6" height="34.6" fill="url(#gy)"/><rect x="286.5" y="798.5" width="100.6" height="74.0" fill="url(#gy)"/><rect x="412.7" y="798.5" width="100.6" height="74.0" fill="url(#nv)"/><rect x="538.9" y="798.6" width="100.6" height="10.3" fill="#7bcd74"/><rect x="665.1" y="808.9" width="100.6" height="63.6" fill="url(#nv)"/><line x1="136.0" x2="159.7" y1="833.5" y2="833.5" stroke="#a8a8a8" stroke-width="1" stroke-dasharray="1 2"/><line x1="262.2" x2="285.8" y1="798.7" y2="798.7" stroke="#a8a8a8" stroke-width="1" stroke-dasharray="1 2"/><line x1="388.3" x2="412.0" y1="798.7" y2="798.7" stroke="#a8a8a8" stroke-width="1" stroke-dasharray="1 2"/><line x1="514.5" x2="538.2" y1="798.7" y2="798.7" stroke="#a8a8a8" stroke-width="1" stroke-dasharray="1 2"/><line x1="640.7" x2="664.4" y1="809.1" y2="809.1" stroke="#a8a8a8" stroke-width="1" stroke-dasharray="1 2"/><line x1="9" x2="791" y1="872.5" y2="872.5" stroke="#999" stroke-width="1"/><line x1="84.5" x2="84.5" y1="873" y2="879.6" stroke="#8f8f8f" stroke-width="1"/><line x1="210.67000000000002" x2="210.67000000000002" y1="873" y2="879.6" stroke="#8f8f8f" stroke-width="1"/><line x1="336.84000000000003" x2="336.84000000000003" y1="873" y2="879.6" stroke="#8f8f8f" stroke-width="1"/><line x1="463.01" x2="463.01" y1="873" y2="879.6" stroke="#8f8f8f" stroke-width="1"/><line x1="589.1800000000001" x2="589.1800000000001" y1="873" y2="879.6" stroke="#8f8f8f" stroke-width="1"/><line x1="715.35" x2="715.35" y1="873" y2="879.6" stroke="#8f8f8f" stroke-width="1"/></svg>
<div class="t" style="top:820.00px;font-size:10px;line-height:13px;color:#444;font-weight:700;letter-spacing:0.102px;left:84.55px;transform:translateX(-50%);">4.5%</div>
<div class="t" style="top:785.00px;font-size:10px;line-height:13px;color:#444;font-weight:700;letter-spacing:0.369px;left:210.85px;transform:translateX(-50%);">4.0%</div>
<div class="t" style="top:785.00px;font-size:10px;line-height:13px;color:#444;font-weight:700;letter-spacing:0.202px;left:336.94px;transform:translateX(-50%);">8.5%</div>
<div class="t" style="top:785.00px;font-size:10px;line-height:13px;color:#444;font-weight:700;letter-spacing:0.202px;left:463.11px;transform:translateX(-50%);">8.5%</div>
<div class="t" style="top:785.00px;font-size:10px;line-height:13px;color:#444;font-weight:700;letter-spacing:-0.111px;left:589.12px;transform:translateX(-50%);">(1.2%)</div>
<div class="t" style="top:796.00px;font-size:10px;line-height:13px;color:#444;font-weight:700;letter-spacing:-0.598px;left:715.05px;transform:translateX(-50%);">7.3%</div>
<div class="t" style="top:888.00px;font-size:10px;line-height:13px;color:#444;letter-spacing:0.009px;left:84.50px;transform:translateX(-50%);">Risk Free Rate</div>
<div class="t" style="top:888.00px;font-size:10px;line-height:13px;color:#444;letter-spacing:0.122px;left:210.73px;transform:translateX(-50%);">Market Risk</div>
<div class="t" style="top:898.00px;font-size:10px;line-height:13px;color:#444;letter-spacing:0.199px;left:210.77px;transform:translateX(-50%);">Premium</div>
<div class="t" style="top:888.00px;font-size:10px;line-height:13px;color:#444;letter-spacing:0.429px;left:337.05px;transform:translateX(-50%);">Expected</div>
<div class="t" style="top:898.00px;font-size:10px;line-height:13px;color:#444;letter-spacing:0.27px;left:336.98px;transform:translateX(-50%);">Market Return</div>
<div class="t" style="top:888.00px;font-size:10px;line-height:13px;color:#444;letter-spacing:0.388px;left:463.20px;transform:translateX(-50%);">Cost of Equity</div>
<div class="t" style="top:888.00px;font-size:10px;line-height:13px;color:#444;letter-spacing:0.228px;left:589.29px;transform:translateX(-50%);">Leverage</div>
<div class="t" style="top:898.00px;font-size:10px;line-height:13px;color:#444;letter-spacing:0.578px;left:589.47px;transform:translateX(-50%);">Impact</div>
<div class="t" style="top:888.00px;font-size:10px;line-height:13px;color:#444;letter-spacing:0.273px;left:715.49px;transform:translateX(-50%);">WACC</div>
<div class="t" style="top:930.00px;font-size:8.7px;line-height:11px;color:#444;font-style:italic;right:1002.80px;">kd:</div>
<div class="t" style="top:930.00px;font-size:8.7px;line-height:11px;color:#222;font-weight:700;left:592.80px;">6.0%</div>
<div class="t" style="top:943.00px;font-size:8.7px;line-height:11px;color:#444;font-style:italic;right:1002.80px;">kd(1-t):</div>
<div class="t" style="top:943.00px;font-size:8.7px;line-height:11px;color:#222;font-weight:700;left:592.80px;">4.4%</div>
<div class="t" style="top:955.00px;font-size:8.7px;line-height:11px;color:#444;font-style:italic;right:1002.80px;">D/E:</div>
<div class="t" style="top:955.00px;font-size:8.7px;line-height:11px;color:#222;font-weight:700;left:592.80px;">0.4x</div>
<div class="p" style="left:798px;top:473px;width:784px;height:505px;"></div>
<div class="t" style="top:482.00px;font-size:15.4px;line-height:20px;color:#2b2b2b;font-weight:700;letter-spacing:0.236px;left:812.60px;">Summary Financials</div>
<div class="t" style="top:481.00px;font-size:12.4px;line-height:16px;color:#6a6a6a;font-style:italic;right:53.30px;">$ in mm, FYE Dec 31</div>
<div style="left:1554px;top:480px;width:21px;height:19px;border:1px solid #dadada;border-radius:4px;background:#fcfcfc;"></div>
<svg style="left:1557.5px;top:482.5px" width="14" height="14" viewBox="-7 -7 14 14" fill="none" stroke="#8e8e8e" stroke-width="0.95"><circle r="5"/><line x1="5.00" y1="0.00" x2="6.70" y2="0.00" stroke-width="1.3"/><line x1="4.33" y1="2.50" x2="5.80" y2="3.35" stroke-width="1.3"/><line x1="2.50" y1="4.33" x2="3.35" y2="5.80" stroke-width="1.3"/><line x1="0.00" y1="5.00" x2="0.00" y2="6.70" stroke-width="1.3"/><line x1="-2.50" y1="4.33" x2="-3.35" y2="5.80" stroke-width="1.3"/><line x1="-4.33" y1="2.50" x2="-5.80" y2="3.35" stroke-width="1.3"/><line x1="-5.00" y1="0.00" x2="-6.70" y2="0.00" stroke-width="1.3"/><line x1="-4.33" y1="-2.50" x2="-5.80" y2="-3.35" stroke-width="1.3"/><line x1="-2.50" y1="-4.33" x2="-3.35" y2="-5.80" stroke-width="1.3"/><line x1="-0.00" y1="-5.00" x2="-0.00" y2="-6.70" stroke-width="1.3"/><line x1="2.50" y1="-4.33" x2="3.35" y2="-5.80" stroke-width="1.3"/><line x1="4.33" y1="-2.50" x2="5.80" y2="-3.35" stroke-width="1.3"/><path d="M0 0 L-2.6 -3.9 M0 0 L4.7 -0.6 M0 0 L-1.8 4.3"/></svg>
<div class="tb" style="left:806px;top:505px;width:769px;height:457px;">
<div style="left:0;top:0;width:769px;height:61px;background:#f9f9f9;"></div>
<div style="left:0;top:61px;width:769px;height:53px;background:#d8ebf9;border-top:1px solid #cfcfcf;"></div>
<div style="left:0;top:113px;width:769px;height:53px;background:#d8ebf9;border-top:1px solid #cfcfcf;"></div>
<div style="left:0;top:165px;width:769px;height:53px;background:#fff;border-top:1px solid #cfcfcf;"></div>
<div style="left:0;top:217px;width:769px;height:53px;background:#fff;border-top:1px solid #cfcfcf;"></div>
<div style="left:0;top:269px;width:769px;height:54px;background:#fff;border-top:1px solid #cfcfcf;"></div>
<div style="left:0;top:322px;width:769px;height:28px;background:#fff;border-top:1px solid #cfcfcf;"></div>
<div style="left:0;top:349px;width:769px;height:27px;background:#fff;border-top:1px solid #cfcfcf;"></div>
<div style="left:0;top:375px;width:769px;height:28px;background:#fff;border-top:1px solid #cfcfcf;"></div>
<div style="left:0;top:402px;width:769px;height:28px;background:#fff;border-top:1px solid #cfcfcf;"></div>
<div style="left:0;top:429px;width:769px;height:28px;background:#d8ebf9;border-top:1px solid #cfcfcf;"></div>
<div style="left:232px;top:30px;width:769px;height:1px;background:#cfcfcf;"></div>
<div style="left:434px;top:0;width:1px;height:457px;background:#cfcfcf;"></div>
<div style="left:632px;top:0;width:1px;height:457px;background:#cfcfcf;"></div>
</div>
<div style="left:1243px;top:783px;width:195px;height:153px;border:2px solid #c4e1f6;border-bottom:none;border-radius:9px 9px 0 0;"></div>
<div class="t" style="top:513.00px;font-size:11.8px;line-height:15px;color:#707070;left:1139.70px;transform:translateX(-50%);">Historical</div>
<div class="t" style="top:513.00px;font-size:11.8px;line-height:15px;color:#707070;left:1340.50px;transform:translateX(-50%);">Forecast</div>
<div class="t" style="top:513.00px;font-size:11.8px;line-height:15px;color:#707070;left:1506.60px;transform:translateX(-50%);">CAGR / Δ</div>
<div class="t" style="top:544.00px;font-size:11px;line-height:14px;color:#676767;font-weight:700;letter-spacing:0.434px;right:489.77px;">FY2022</div>
<div class="t" style="top:544.00px;font-size:11px;line-height:14px;color:#676767;font-weight:700;letter-spacing:0.434px;right:422.57px;">FY2023</div>
<div class="t" style="top:544.00px;font-size:11px;line-height:14px;color:#676767;font-weight:700;letter-spacing:0.434px;right:357.57px;">FY2024</div>
<div class="t" style="top:544.00px;font-size:11px;line-height:14px;color:#676767;font-weight:700;letter-spacing:0.434px;right:289.57px;">FY2025</div>
<div class="t" style="top:544.00px;font-size:11px;line-height:14px;color:#676767;font-weight:700;letter-spacing:0.434px;right:222.37px;">FY2026</div>
<div class="t" style="top:544.00px;font-size:11px;line-height:14px;color:#676767;font-weight:700;letter-spacing:0.434px;right:159.27px;">FY2027</div>
<div class="t" style="top:544.00px;font-size:11px;line-height:14px;color:#676767;font-weight:700;letter-spacing:0.081px;right:92.22px;">'21A-'24A</div>
<div class="t" style="top:544.00px;font-size:11px;line-height:14px;color:#676767;font-weight:700;letter-spacing:0.156px;right:24.84px;">'24A-'27E</div>
<div class="t" style="top:572.00px;font-size:12.1px;line-height:16px;color:#151c30;font-weight:700;letter-spacing:0.05px;left:813.30px;">Revenue</div>
<div class="t" style="top:572.00px;font-size:12.1px;line-height:16px;color:#151c30;font-weight:700;letter-spacing:0.45px;right:489.75px;">$2,000.8</div>
<div class="t" style="top:572.00px;font-size:12.1px;line-height:16px;color:#151c30;font-weight:700;letter-spacing:0.45px;right:422.55px;">$2,233.0</div>
<div class="t" style="top:572.00px;font-size:12.1px;line-height:16px;color:#151c30;font-weight:700;letter-spacing:0.45px;right:357.55px;">$2,427.3</div>
<div class="t" style="top:572.00px;font-size:12.1px;line-height:16px;color:#151c30;font-weight:700;letter-spacing:0.45px;right:289.55px;">$2,424.9</div>
<div class="t" style="top:572.00px;font-size:12.1px;line-height:16px;color:#151c30;font-weight:700;letter-spacing:0.45px;right:222.35px;">$2,505.7</div>
<div class="t" style="top:572.00px;font-size:12.1px;line-height:16px;color:#151c30;font-weight:700;letter-spacing:0.45px;right:159.25px;">$2,617.1</div>
<div class="t" style="top:572.00px;font-size:12.1px;line-height:16px;color:#151c30;font-weight:700;letter-spacing:0.45px;right:91.85px;">9.9%</div>
<div class="t" style="top:572.00px;font-size:12.1px;line-height:16px;color:#151c30;font-weight:700;letter-spacing:0.45px;right:24.55px;">2.5%</div>
<div class="t" style="top:598.00px;font-size:12.2px;line-height:16px;color:#2a2a2a;font-style:italic;letter-spacing:0.748px;left:813.30px;">% Y/Y growth</div>
<div class="t" style="top:598.00px;font-size:12.0px;line-height:16px;color:#2a2a2a;font-style:italic;letter-spacing:-0.15px;right:490.35px;">9.6%</div>
<div class="t" style="top:598.00px;font-size:12.0px;line-height:16px;color:#2a2a2a;font-style:italic;letter-spacing:-0.15px;right:423.15px;">11.6%</div>
<div class="t" style="top:598.00px;font-size:12.0px;line-height:16px;color:#2a2a2a;font-style:italic;letter-spacing:-0.15px;right:358.15px;">8.7%</div>
<div class="t" style="top:598.00px;font-size:12.0px;line-height:16px;color:#2a2a2a;font-style:italic;letter-spacing:-0.15px;right:290.15px;">(0.1%)</div>
<div class="t" style="top:598.00px;font-size:12.0px;line-height:16px;color:#2a2a2a;font-style:italic;letter-spacing:-0.15px;right:222.95px;">3.3%</div>
<div class="t" style="top:598.00px;font-size:12.0px;line-height:16px;color:#2a2a2a;font-style:italic;letter-spacing:-0.15px;right:159.85px;">4.4%</div>
<div class="t" style="top:624.00px;font-size:12.1px;line-height:16px;color:#151c30;font-weight:700;letter-spacing:0.05px;left:813.30px;">EBITDA</div>
<div class="t" style="top:624.00px;font-size:12.1px;line-height:16px;color:#151c30;font-weight:700;letter-spacing:0.45px;right:489.75px;">$244.6</div>
<div class="t" style="top:624.00px;font-size:12.1px;line-height:16px;color:#151c30;font-weight:700;letter-spacing:0.45px;right:422.55px;">$256.7</div>
<div class="t" style="top:624.00px;font-size:12.1px;line-height:16px;color:#151c30;font-weight:700;letter-spacing:0.45px;right:357.55px;">$327.2</div>
<div class="t" style="top:624.00px;font-size:12.1px;line-height:16px;color:#151c30;font-weight:700;letter-spacing:0.45px;right:289.55px;">$337.2</div>
<div class="t" style="top:624.00px;font-size:12.1px;line-height:16px;color:#151c30;font-weight:700;letter-spacing:0.45px;right:222.35px;">$363.2</div>
<div class="t" style="top:624.00px;font-size:12.1px;line-height:16px;color:#151c30;font-weight:700;letter-spacing:0.45px;right:159.25px;">$388.5</div>
<div class="t" style="top:624.00px;font-size:12.1px;line-height:16px;color:#151c30;font-weight:700;letter-spacing:0.45px;right:91.85px;">2.6%</div>
<div class="t" style="top:624.00px;font-size:12.1px;line-height:16px;color:#151c30;font-weight:700;letter-spacing:0.45px;right:24.55px;">5.9%</div>
<div class="t" style="top:650.00px;font-size:12.2px;line-height:16px;color:#2a2a2a;font-style:italic;letter-spacing:0.3px;left:813.30px;">% margin</div>
<div class="t" style="top:650.00px;font-size:12.0px;line-height:16px;color:#2a2a2a;font-style:italic;letter-spacing:-0.15px;right:490.35px;">12.2%</div>
<div class="t" style="top:650.00px;font-size:12.0px;line-height:16px;color:#2a2a2a;font-style:italic;letter-spacing:-0.15px;right:423.15px;">11.5%</div>
<div class="t" style="top:650.00px;font-size:12.0px;line-height:16px;color:#2a2a2a;font-style:italic;letter-spacing:-0.15px;right:358.15px;">13.5%</div>
<div class="t" style="top:650.00px;font-size:12.0px;line-height:16px;color:#2a2a2a;font-style:italic;letter-spacing:-0.15px;right:290.15px;">13.9%</div>
<div class="t" style="top:650.00px;font-size:12.0px;line-height:16px;color:#2a2a2a;font-style:italic;letter-spacing:-0.15px;right:222.95px;">14.5%</div>
<div class="t" style="top:650.00px;font-size:12.0px;line-height:16px;color:#2a2a2a;font-style:italic;letter-spacing:-0.15px;right:159.85px;">14.8%</div>
<div class="t" style="top:650.00px;font-size:12.0px;line-height:16px;color:#2a2a2a;font-style:italic;letter-spacing:-0.15px;right:92.45px;">(313bps)</div>
<div class="t" style="top:650.00px;font-size:12.0px;line-height:16px;color:#2a2a2a;font-style:italic;letter-spacing:-0.15px;right:25.15px;">137bps</div>
<div class="t" style="top:676.00px;font-size:12.2px;line-height:16px;color:#333;letter-spacing:0.3px;left:813.30px;">Capex</div>
<div class="t" style="top:676.00px;font-size:12.2px;line-height:16px;color:#333;letter-spacing:-0.1px;right:490.30px;">$144.3</div>
<div class="t" style="top:676.00px;font-size:12.2px;line-height:16px;color:#333;letter-spacing:-0.1px;right:423.10px;">$172.0</div>
<div class="t" style="top:676.00px;font-size:12.2px;line-height:16px;color:#333;letter-spacing:-0.1px;right:358.10px;">$160.4</div>
<div class="t" style="top:676.00px;font-size:12.2px;line-height:16px;color:#333;letter-spacing:-0.1px;right:290.10px;">$150.7</div>
<div class="t" style="top:676.00px;font-size:12.2px;line-height:16px;color:#333;letter-spacing:-0.1px;right:222.90px;">$158.9</div>
<div class="t" style="top:676.00px;font-size:12.2px;line-height:16px;color:#333;letter-spacing:-0.1px;right:159.80px;">$163.2</div>
<div class="t" style="top:676.00px;font-size:12.2px;line-height:16px;color:#333;letter-spacing:-0.1px;right:92.40px;">6.3%</div>
<div class="t" style="top:676.00px;font-size:12.2px;line-height:16px;color:#333;letter-spacing:-0.1px;right:25.10px;">0.6%</div>
<div class="t" style="top:702.00px;font-size:12.2px;line-height:16px;color:#333;font-style:italic;letter-spacing:0.3px;left:813.30px;">% revenue</div>
<div class="t" style="top:702.00px;font-size:12.0px;line-height:16px;color:#333;font-style:italic;letter-spacing:-0.15px;right:490.35px;">7.2%</div>
<div class="t" style="top:702.00px;font-size:12.0px;line-height:16px;color:#333;font-style:italic;letter-spacing:-0.15px;right:423.15px;">7.7%</div>
<div class="t" style="top:702.00px;font-size:12.0px;line-height:16px;color:#333;font-style:italic;letter-spacing:-0.15px;right:358.15px;">6.6%</div>
<div class="t" style="top:702.00px;font-size:12.0px;line-height:16px;color:#333;font-style:italic;letter-spacing:-0.15px;right:290.15px;">6.2%</div>
<div class="t" style="top:702.00px;font-size:12.0px;line-height:16px;color:#333;font-style:italic;letter-spacing:-0.15px;right:222.95px;">6.3%</div>
<div class="t" style="top:702.00px;font-size:12.0px;line-height:16px;color:#333;font-style:italic;letter-spacing:-0.15px;right:159.85px;">6.2%</div>
<div class="t" style="top:702.00px;font-size:12.0px;line-height:16px;color:#333;font-style:italic;letter-spacing:-0.15px;right:92.45px;">(71bps)</div>
<div class="t" style="top:702.00px;font-size:12.0px;line-height:16px;color:#333;font-style:italic;letter-spacing:-0.15px;right:25.15px;">(37bps)</div>
<div class="t" style="top:729.00px;font-size:12.2px;line-height:16px;color:#333;letter-spacing:0.3px;left:813.30px;">Δ NWC</div>
<div class="t" style="top:729.00px;font-size:12.2px;line-height:16px;color:#333;letter-spacing:-0.1px;right:490.30px;">($119.2)</div>
<div class="t" style="top:729.00px;font-size:12.2px;line-height:16px;color:#333;letter-spacing:-0.1px;right:423.10px;">($43.3)</div>
<div class="t" style="top:729.00px;font-size:12.2px;line-height:16px;color:#333;letter-spacing:-0.1px;right:358.10px;">($9.9)</div>
<div class="t" style="top:729.00px;font-size:12.2px;line-height:16px;color:#333;letter-spacing:-0.1px;right:290.10px;">-</div>
<div class="t" style="top:729.00px;font-size:12.2px;line-height:16px;color:#333;letter-spacing:-0.1px;right:222.90px;">-</div>
<div class="t" style="top:729.00px;font-size:12.2px;line-height:16px;color:#333;letter-spacing:-0.1px;right:159.80px;">-</div>
<div class="t" style="top:729.00px;font-size:12.2px;line-height:16px;color:#333;letter-spacing:-0.1px;right:92.40px;">(43.2%)</div>
<div class="t" style="top:729.00px;font-size:12.2px;line-height:16px;color:#333;letter-spacing:-0.1px;right:25.10px;">(100.0%)</div>
<div class="t" style="top:754.00px;font-size:12.2px;line-height:16px;color:#333;font-style:italic;letter-spacing:0.3px;left:813.30px;">% revenue</div>
<div class="t" style="top:754.00px;font-size:12.0px;line-height:16px;color:#333;font-style:italic;letter-spacing:-0.15px;right:490.35px;">(6.0%)</div>
<div class="t" style="top:754.00px;font-size:12.0px;line-height:16px;color:#333;font-style:italic;letter-spacing:-0.15px;right:423.15px;">(1.9%)</div>
<div class="t" style="top:754.00px;font-size:12.0px;line-height:16px;color:#333;font-style:italic;letter-spacing:-0.15px;right:358.15px;">(0.4%)</div>
<div class="t" style="top:754.00px;font-size:12.0px;line-height:16px;color:#333;font-style:italic;letter-spacing:-0.15px;right:290.15px;">-</div>
<div class="t" style="top:754.00px;font-size:12.0px;line-height:16px;color:#333;font-style:italic;letter-spacing:-0.15px;right:222.95px;">-</div>
<div class="t" style="top:754.00px;font-size:12.0px;line-height:16px;color:#333;font-style:italic;letter-spacing:-0.15px;right:159.85px;">-</div>
<div class="t" style="top:754.00px;font-size:12.0px;line-height:16px;color:#333;font-style:italic;letter-spacing:-0.15px;right:92.45px;">255bps</div>
<div class="t" style="top:754.00px;font-size:12.0px;line-height:16px;color:#333;font-style:italic;letter-spacing:-0.15px;right:25.15px;">41bps</div>
<div class="t" style="top:788.00px;font-size:10.3px;line-height:13px;color:#777;left:1340.30px;transform:translateX(-50%);">Hold Period (3 Yrs)</div>
<div class="t" style="top:810.00px;font-size:10px;line-height:13px;color:#676767;font-weight:700;right:289.70px;">Yr 1</div>
<div class="t" style="top:810.00px;font-size:10px;line-height:13px;color:#676767;font-weight:700;right:222.90px;">Yr 2</div>
<div class="t" style="top:810.00px;font-size:10px;line-height:13px;color:#676767;font-weight:700;right:162.00px;">Yr 3</div>
<div class="t" style="top:833.00px;font-size:12.2px;line-height:16px;color:#333;letter-spacing:0.3px;left:813.30px;">Total Unadj. EBITDA</div>
<div class="t" style="top:833.00px;font-size:12.2px;line-height:16px;color:#333;letter-spacing:-0.15px;right:289.85px;">$337.2</div>
<div class="t" style="top:833.00px;font-size:12.2px;line-height:16px;color:#333;letter-spacing:-0.15px;right:223.05px;">$363.2</div>
<div class="t" style="top:833.00px;font-size:12.2px;line-height:16px;color:#333;letter-spacing:-0.15px;right:162.15px;">$388.5</div>
<div class="t" style="top:860.00px;font-size:12.2px;line-height:16px;color:#333;letter-spacing:0.3px;left:813.30px;">(-) Unlevered Taxes</div>
<div class="t" style="top:860.00px;font-size:12.2px;line-height:16px;color:#333;letter-spacing:-0.15px;right:289.85px;">($48.5)</div>
<div class="t" style="top:860.00px;font-size:12.2px;line-height:16px;color:#333;letter-spacing:-0.15px;right:223.05px;">($53.1)</div>
<div class="t" style="top:860.00px;font-size:12.2px;line-height:16px;color:#333;letter-spacing:-0.15px;right:162.15px;">($58.6)</div>
<div class="t" style="top:887.00px;font-size:12.2px;line-height:16px;color:#333;letter-spacing:0.3px;left:813.30px;">(-) Total Capex</div>
<div class="t" style="top:887.00px;font-size:12.2px;line-height:16px;color:#333;letter-spacing:-0.15px;right:289.85px;">($150.7)</div>
<div class="t" style="top:887.00px;font-size:12.2px;line-height:16px;color:#333;letter-spacing:-0.15px;right:223.05px;">($158.9)</div>
<div class="t" style="top:887.00px;font-size:12.2px;line-height:16px;color:#333;letter-spacing:-0.15px;right:162.15px;">($163.2)</div>
<div class="t" style="top:913.00px;font-size:12.2px;line-height:16px;color:#333;letter-spacing:0.593px;left:813.30px;">(+/-) Total Δ in Net Working Capital</div>
<div class="t" style="top:913.00px;font-size:12.2px;line-height:16px;color:#333;letter-spacing:-0.15px;right:289.85px;">-</div>
<div class="t" style="top:913.00px;font-size:12.2px;line-height:16px;color:#333;letter-spacing:-0.15px;right:223.05px;">-</div>
<div class="t" style="top:913.00px;font-size:12.2px;line-height:16px;color:#333;letter-spacing:-0.15px;right:162.15px;">-</div>
<div class="t" style="top:940.00px;font-size:12.1px;line-height:16px;color:#151c30;font-weight:700;letter-spacing:0.213px;left:813.30px;">Unlevered Free Cash Flow</div>
<div class="t" style="top:940.00px;font-size:12.1px;line-height:16px;color:#151c30;font-weight:700;letter-spacing:0.45px;right:289.25px;">$138.0</div>
<div class="t" style="top:940.00px;font-size:12.1px;line-height:16px;color:#151c30;font-weight:700;letter-spacing:0.45px;right:222.45px;">$151.2</div>
<div class="t" style="top:940.00px;font-size:12.1px;line-height:16px;color:#151c30;font-weight:700;letter-spacing:0.45px;right:161.55px;">$166.8</div>
</div></body></html>
